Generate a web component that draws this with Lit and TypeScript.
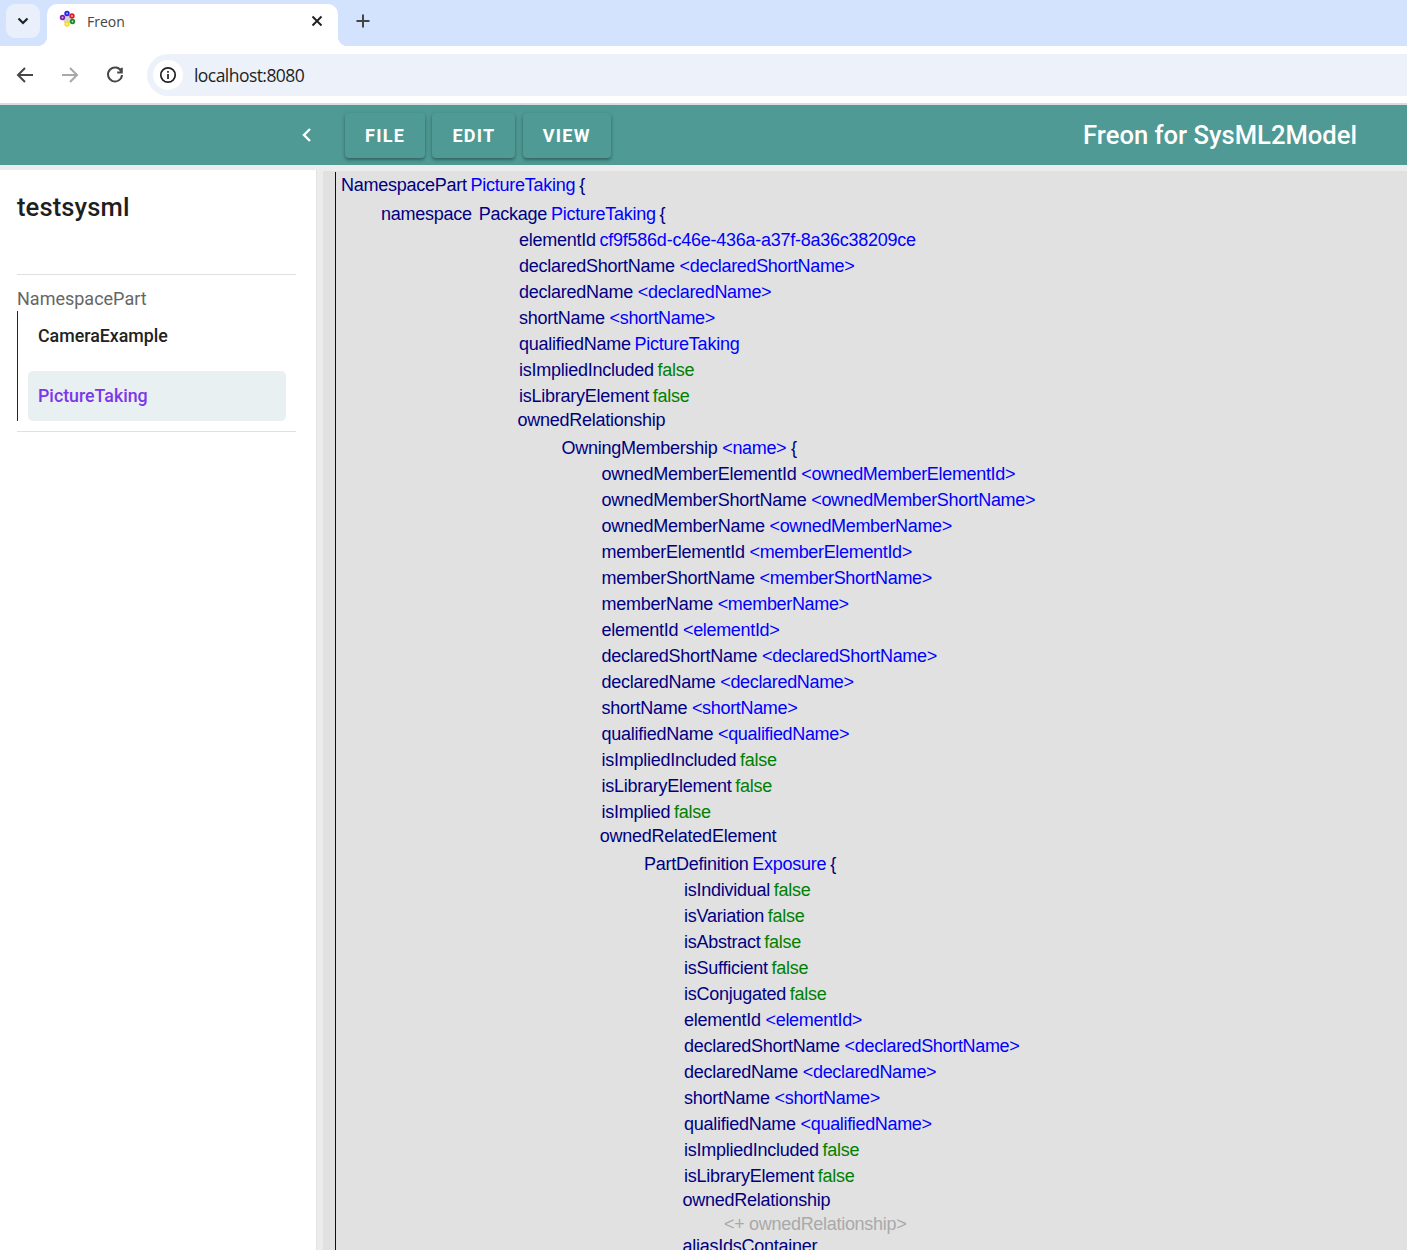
import { LitElement, html, css, svg } from "lit";
import { customElement } from "lit/decorators.js";

type Row = { i: number; t: string; k?: string; v?: string; kind?: "val" | "bool" | "hint"; brace?: boolean; cls?: string };

const P = (i: number, t: string, v: string, kind: "val" | "bool" = "val"): Row => ({ i, t, v, kind });
const ph = (i: number, n: string): Row => P(i, n, `<${n}>`);
const L = (i: number, t: string): Row => ({ i, t, cls: "label" });
const O = (i: number, t: string, v: string): Row => ({ i, t, v, kind: "val", brace: true, cls: "object" });

const ROWS: Row[] = [
  { i: 341, t: "NamespacePart", v: "PictureTaking", kind: "val", brace: true },
  { i: 381, t: "namespace", k: "Package", v: "PictureTaking", kind: "val", brace: true, cls: "first" },
  P(519, "elementId", "cf9f586d-c46e-436a-a37f-8a36c38209ce"),
  ph(519, "declaredShortName"),
  ph(519, "declaredName"),
  ph(519, "shortName"),
  P(519, "qualifiedName", "PictureTaking"),
  P(519, "isImpliedIncluded", "false", "bool"),
  P(519, "isLibraryElement", "false", "bool"),
  L(517.5, "ownedRelationship"),
  O(561.4, "OwningMembership", "<name>"),
  ph(601.4, "ownedMemberElementId"),
  ph(601.4, "ownedMemberShortName"),
  ph(601.4, "ownedMemberName"),
  ph(601.4, "memberElementId"),
  ph(601.4, "memberShortName"),
  ph(601.4, "memberName"),
  ph(601.4, "elementId"),
  ph(601.4, "declaredShortName"),
  ph(601.4, "declaredName"),
  ph(601.4, "shortName"),
  ph(601.4, "qualifiedName"),
  P(601.4, "isImpliedIncluded", "false", "bool"),
  P(601.4, "isLibraryElement", "false", "bool"),
  P(601.4, "isImplied", "false", "bool"),
  L(599.8, "ownedRelatedElement"),
  O(644, "PartDefinition", "Exposure"),
  P(684, "isIndividual", "false", "bool"),
  P(684, "isVariation", "false", "bool"),
  P(684, "isAbstract", "false", "bool"),
  P(684, "isSufficient", "false", "bool"),
  P(684, "isConjugated", "false", "bool"),
  ph(684, "elementId"),
  ph(684, "declaredShortName"),
  ph(684, "declaredName"),
  ph(684, "shortName"),
  ph(684, "qualifiedName"),
  P(684, "isImpliedIncluded", "false", "bool"),
  P(684, "isLibraryElement", "false", "bool"),
  L(682.5, "ownedRelationship"),
  { i: 724, t: "", v: "<+ ownedRelationship>", kind: "hint", cls: "hintrow" },
  L(682.5, "aliasIdsContainer"),
];

const LOGO = [
  [3.5, 7.5, "#7b1fa2"],
  [8, 3.5, "#2222ee"],
  [13, 6, "#e02020"],
  [13.5, 11.5, "#1a8a2a"],
  [8, 14, "#f2dd20"],
] as const;

@customElement("app-root")
export class AppRoot extends LitElement {
  static styles = css`
    :host {
      display: flex;
      flex-direction: column;
      height: 100vh;
      overflow: hidden;
      background: #ececec;
      font-family: Roboto, sans-serif;
    }
    .strip {
      height: 46px;
      background: #d3e3fd;
      display: flex;
      align-items: flex-start;
      flex: none;
    }
    .tabs-btn {
      width: 34px;
      height: 34px;
      margin: 4px 0 0 6px;
      background: #e9f0fc;
      border-radius: 9px;
      display: flex;
      align-items: center;
      justify-content: center;
    }
    .tab {
      position: relative;
      width: 291px;
      height: 42px;
      margin: 4px 0 0 7px;
      background: #fff;
      border-radius: 10px 10px 0 0;
      display: flex;
      align-items: center;
      padding: 0 14px 8px 12px;
      box-sizing: border-box;
      font: 14px "Open Sans", sans-serif;
      color: #444;
    }
    .tab::before,
    .tab::after {
      content: "";
      position: absolute;
      bottom: 0;
      width: 10px;
      height: 10px;
    }
    .tab::before {
      left: -10px;
      background: radial-gradient(circle at 0 0, transparent 10px, #fff 10.5px);
    }
    .tab::after {
      right: -10px;
      background: radial-gradient(circle at 100% 0, transparent 10px, #fff 10.5px);
    }
    .tab .title {
      flex: 1;
      margin-left: 10px;
    }
    .tab .logo {
      margin-top: -5px;
    }
    .plus {
      margin: 13px 0 0 17px;
    }
    .toolbar {
      height: 57px;
      background: #fff;
      display: flex;
      align-items: center;
      flex: none;
      border-bottom: 2px solid #d9dcdb;
      box-sizing: content-box;
    }
    .nav {
      width: 24px;
      height: 24px;
      margin-left: 13px;
      margin-right: 8px;
      flex: none;
    }
    .nav + .nav {
      margin-left: 13px;
    }
    .omni {
      flex: 1;
      height: 42px;
      margin-left: 12px;
      margin-top: 1px;
      background: #edf2fa;
      border-radius: 21px 0 0 21px;
      display: flex;
      align-items: center;
      padding-left: 6px;
    }
    .info {
      width: 30px;
      height: 30px;
      background: #fff;
      border-radius: 50%;
      display: flex;
      align-items: center;
      justify-content: center;
    }
    .url {
      margin-left: 11px;
      font: 17.5px "Open Sans", sans-serif;
      letter-spacing: -0.55px;
      color: #1f1f1f;
    }
    header {
      height: 60px;
      background: #4f9a94;
      display: flex;
      align-items: center;
      color: #fff;
      flex: none;
    }
    .back {
      margin-left: 299px;
      width: 16px;
      height: 16px;
    }
    .menu {
      display: flex;
      margin-left: 30px;
      gap: 7.4px;
      margin-top: 1px;
    }
    .menu button {
      height: 45px;
      padding: 0 20px;
      border: 0;
      border-radius: 4px;
      background: #4f9a94;
      color: #fff;
      font: 700 18px Roboto, sans-serif;
      letter-spacing: 1.25px;
      box-shadow: 0 2px 3px rgba(0, 0, 0, 0.28), 0 1px 5px rgba(0, 0, 0, 0.12);
    }
    .brand {
      margin-left: auto;
      margin-right: 50px;
      font: 500 25.6px Roboto, sans-serif;
    }
    .body {
      flex: 1;
      min-height: 0;
      display: flex;
      padding-top: 5px;
    }
    aside {
      background: #fff;
      border-right: 1px solid #e2e2e2;
      padding: 0 20px 0 17px;
      width: 279px;
      flex: none;
    }
    aside h2 {
      margin: 0;
      padding-top: 20px;
      height: 84px;
      font: 500 25.6px/34px Roboto, sans-serif;
      color: #1f1f1f;
      letter-spacing: 0.1px;
      border-bottom: 1px solid #e0e0e0;
    }
    .group {
      padding: 12px 0 10px;
      border-bottom: 1px solid #e0e0e0;
    }
    .group-title {
      font: 400 18px/23px Roboto, sans-serif;
      color: #666;
      margin-bottom: 1px;
    }
    .items {
      border-left: 1px solid #800000;
      padding-left: 10px;
      margin-right: 10px;
      height: 110px;
      display: flex;
      flex-direction: column;
    }
    .item {
      height: 50px;
      padding: 0 0 2px 10px;
      box-sizing: border-box;
      display: flex;
      align-items: center;
      font: 500 17.8px Roboto, sans-serif;
      color: #222;
      border-radius: 5px;
    }
    .item.active {
      margin-top: 10px;
      background: #e8f0f1;
      color: #7c38e8;
    }
    .editor {
      flex: 1;
      min-width: 0;
      margin: 1px 0 0 6px;
      background: #e1e1e1;
      padding: 1px 0 0 12px;
      overflow: hidden;
    }
    .tree {
      border-left: 1px solid #000080;
      height: 1200px;
      font: 18px/26px "Liberation Sans", Arial, sans-serif;
      letter-spacing: -0.25px;
      color: #000080;
    }
    .row {
      height: 26px;
      white-space: pre;
    }
    .row.first {
      margin-top: 3px;
    }
    .row.object {
      margin-top: 4px;
    }
    .row.label {
      height: 22px;
      line-height: 22px;
    }
    .row.hintrow {
      height: 24px;
    }
    .val { color: #0000ff; }
    .val.ph { letter-spacing: -0.33px; }
    .bool { color: #008000; }
    .hint { color: #a9a9a9; letter-spacing: -0.3px; }
    .tight { margin-left: -1px; }
    .tight.braced { margin-right: -1px; }
    .kw { margin-left: 7px; }
  `;

  private icon(d: string, color: string) {
    return html`<svg class="nav" viewBox="0 0 24 24" fill="none" stroke=${color} stroke-width="2">
      ${svg`<path d=${d} />`}
    </svg>`;
  }

  private row(r: Row) {
    const isPh = r.v?.startsWith("<") && r.kind === "val";
    const cls = [r.kind ?? "", isPh ? "ph" : "", r.v && !r.v.startsWith("<") ? "tight" : "", r.brace ? "braced" : ""].join(" ");
    return html`<div class="row ${r.cls ?? ""}" style="padding-left:${r.i - 336}px">${r.t}${r.k
      ? html`<span class="kw">${r.k}</span>`
      : ""}${r.v ? html`${r.t ? " " : ""}<span class=${cls}>${r.v}</span>` : ""}${r.brace ? " {" : ""}</div>`;
  }

  render() {
    return html`
      <div class="strip">
        <div class="tabs-btn">
          <svg width="14" height="14" viewBox="0 0 14 14" fill="none" stroke="#222" stroke-width="2.2">
            <path d="M2.5 4.5 7 9l4.5-4.5" />
          </svg>
        </div>
        <div class="tab">
          <svg class="logo" width="18" height="18" viewBox="0 0 18 18">
            <circle cx="8.5" cy="9" r="4.5" fill="#d4d4d4" />
            ${LOGO.map(
              ([x, y, c]) => svg`<circle cx=${x} cy=${y} r="2.7" fill=${c} /><circle cx=${x} cy=${y} r="0.9" fill="#fff" opacity="0.7" />`
            )}
          </svg>
          <span class="title">Freon</span>
          <svg width="14" height="14" viewBox="0 0 14 14" fill="none" stroke="#222" stroke-width="2">
            <path d="M2.5 2.5l9 9M11.5 2.5l-9 9" />
          </svg>
        </div>
        <svg class="plus" width="16" height="16" viewBox="0 0 16 16" fill="none" stroke="#444" stroke-width="2">
          <path d="M8 1.5v13M1.5 8h13" />
        </svg>
      </div>
      <div class="toolbar">
        ${this.icon("M20 12H5.5M12 5l-7 7 7 7", "#474747")}
        ${this.icon("M4 12h14.5M12 5l7 7-7 7", "#a8a8a8")}
        ${this.icon("M18.4 8.6A7 7 0 1 0 19 12M18.8 4.8v4.6h-4.6", "#474747")}
        <div class="omni">
          <div class="info">
            <svg width="18" height="18" viewBox="0 0 18 18" fill="none" stroke="#222" stroke-width="1.7">
              <circle cx="9" cy="9" r="7.2" />
              <path d="M9 8v5M9 5v1.8" />
            </svg>
          </div>
          <span class="url">localhost:8080</span>
        </div>
      </div>
      <header>
        <svg class="back" viewBox="0 0 16 16" fill="none" stroke="#fff" stroke-width="2.4">
          <path d="M11 2 5 8l6 6" />
        </svg>
        <div class="menu">
          <button>FILE</button>
          <button>EDIT</button>
          <button>VIEW</button>
        </div>
        <div class="brand">Freon for SysML2Model</div>
      </header>
      <div class="body">
        <aside>
          <h2>testsysml</h2>
          <div class="group">
            <div class="group-title">NamespacePart</div>
            <div class="items">
              <div class="item">CameraExample</div>
              <div class="item active">PictureTaking</div>
            </div>
          </div>
        </aside>
        <div class="editor">
          <div class="tree">${ROWS.map((r) => this.row(r))}</div>
        </div>
      </div>
    `;
  }
}
